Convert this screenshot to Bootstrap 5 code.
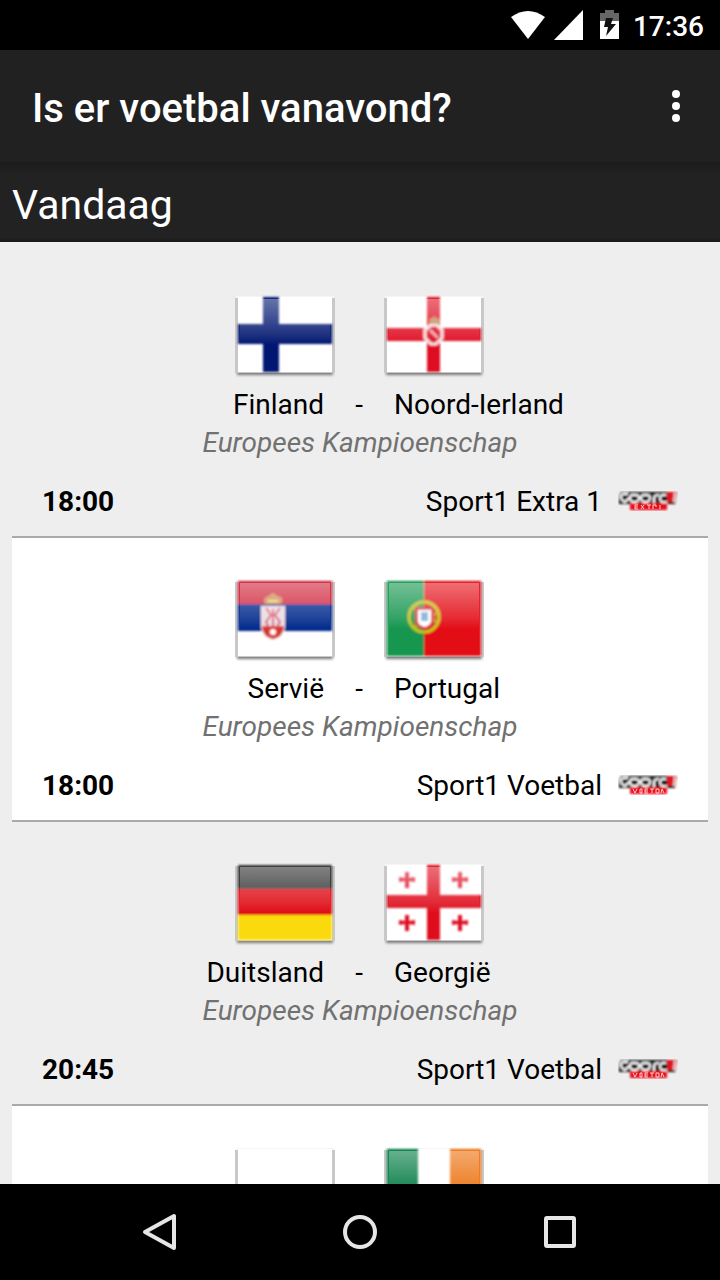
<!DOCTYPE html>
<html lang="nl">
<head>
<meta charset="utf-8">
<meta name="viewport" content="width=device-width, initial-scale=1">
<title>Is er voetbal vanavond?</title>
<link href="https://cdn.jsdelivr.net/npm/bootstrap@5.3.0/dist/css/bootstrap.min.css" rel="stylesheet">
<style>
body { font-family: Roboto, "Noto Sans", sans-serif; font-size: 28px; line-height: 38px; color: #000; background: #eee; }
svg { display: block; flex: none; }
.statusbar { height: 50px; background: #000; font-weight: 500; padding-right: 16px; }
.statusbar span { padding-top: 4px; }
.appbar { height: 112px; background: #212121; padding: 4px 24px 0 32px; }
.appbar h1 { font-size: 40px; line-height: 48px; font-weight: 500; padding-top: 2px; }
.plain-btn { border: 0; background: none; padding: 0; }
.day-head { height: 80px; padding: 6px 12px 0; font-size: 41px; line-height: 48px; font-weight: 400; background: linear-gradient(#1b1b1b, #222 12px, #222 76px, #1c1c1c 78px); }
.matches { min-height: 0; padding: 12px 12px 0; }
.match-row { padding: 41px 30px 15px; border-bottom: 2px solid #a9a9a9; }
.match-row:nth-child(even) { background: #fff; }
.flag-pair { gap: 49px; padding-right: 1px; }
.teams { display: grid; grid-template-columns: 1fr 70px 1fr; padding-right: 2px; }
.league { color: #717171; }
.meta-line { margin-top: 21px; }
.channel { gap: 16px; }
.navkeys { height: 96px; background: #000; padding: 0 60px; }
.navkeys button { width: 200px; height: 96px; }
</style>
</head>
<body>
<svg width="0" height="0" class="position-absolute" aria-hidden="true">
  <defs>
    <filter id="soft" x="-5%" y="-5%" width="110%" height="110%"><feGaussianBlur stdDeviation="0.8"/></filter>
    <filter id="shade" x="-10%" y="-10%" width="120%" height="120%"><feGaussianBlur stdDeviation="1.6"/></filter>
    <linearGradient id="shine" x1="0" y1="0" x2="0" y2="1">
      <stop offset="0" stop-color="#fff" stop-opacity=".4"/>
      <stop offset=".5" stop-color="#fff" stop-opacity=".12"/>
      <stop offset=".65" stop-color="#fff" stop-opacity="0"/>
    </linearGradient>
    <symbol id="flag-base" viewBox="0 0 100 91">
      <rect x="2" y="5" width="96" height="75" fill="#777" filter="url(#shade)"/>
      <rect x="0" y="3" width="100" height="75" fill="#c8c8c8"/>
      <rect x="1" y="1" width="98" height="2" fill="#f5f5f5"/>
      <rect x="3" y="2" width="94" height="75" fill="#fff"/>
    </symbol>
    <symbol id="flag-gloss" viewBox="0 0 100 91">
      <rect x="5" y="4" width="90" height="71" fill="url(#shine)"/>
    </symbol>
    <symbol id="georgian-cross" viewBox="0 0 16 18">
      <path d="M6 1h4v6l6-1v5l-6-1v7H6v-7l-6 1V6l6 1z" fill="#df1020"/>
    </symbol>
    <symbol id="sport-mark" viewBox="0 0 60 24">
      <g filter="url(#soft)">
        <path d="M3 2h56l-2 12H1V6z" fill="#161616"/>
        <path d="M10 4H6Q3 4 3 7t4 5l4-4M14 5h4q3 0 3 3t-3 4h-3q-3-1-3-4t2-3M26 5h3q3 0 3 3t-3 4h-3q-3-1-3-4t3-3M36 13V8q0-3 5-3M48 5h-3q-3 0-3 4t7 3" fill="none" stroke="#fff" stroke-width="2"/>
        <path d="M49 2h10l-2 10h-8z" fill="#df1824"/>
        <path d="M57 3l-1 9" stroke="#f5dada" stroke-width="2"/>
        <path d="M12 13h37v7H12z" fill="#ea101c"/>
      </g>
    </symbol>
  </defs>
</svg>

<div class="d-flex flex-column vh-100 overflow-hidden">
  <div class="statusbar d-flex align-items-center justify-content-end text-white flex-shrink-0">
    <svg width="36" height="30" viewBox="0 0 36 30" fill="#fff"><path d="M1 7Q18-5 35 7L18 29z"/></svg>
    <svg class="ms-2" width="30" height="30" viewBox="0 0 30 30" fill="#fff"><path d="M29 0v30H0z"/></svg>
    <svg class="ms-3" width="33" height="30" viewBox="0 0 33 30"><path d="M0 3h5V0h9v3h5v8H0z" fill="#666"/><path d="M0 11h19v18H0z" fill="#fff"/><path d="M6 8h7l-2 6h5L6 26l2-9H4z" fill="#111"/></svg>
    <span>17:36</span>
  </div>

  <header class="appbar d-flex align-items-center justify-content-between text-white flex-shrink-0">
    <h1 class="m-0">Is er voetbal vanavond?</h1>
    <button type="button" class="plain-btn" aria-label="Meer opties">
      <svg width="40" height="40" viewBox="0 0 40 40" fill="#fff"><circle cx="20" cy="6" r="4"/><circle cx="20" cy="18" r="4"/><circle cx="20" cy="30" r="4"/></svg>
    </button>
  </header>

  <h2 class="day-head d-flex align-items-center text-white m-0 flex-shrink-0">Vandaag</h2>

  <main class="matches flex-grow-1 overflow-hidden">
    <article class="match-row">
      <div class="flag-pair d-flex justify-content-center">
        <svg width="100" height="91" viewBox="0 0 100 91"><use href="#flag-base"/>
          <g filter="url(#soft)"><path d="M28 2h16v75H28zM3 29h94v20H3z" fill="#04146f"/></g><use href="#flag-gloss"/></svg>
        <svg width="100" height="91" viewBox="0 0 100 91"><use href="#flag-base"/>
          <g filter="url(#soft)"><path d="M43 2h13v75H43zM3 33h94v13H3z" fill="#df0a20"/><path d="M47 30h6l5 5v8l-6 6h-5l-6-6v-8z" fill="none" stroke="#fbe6ea" stroke-width="3"/><path d="M46 35l8 8" stroke="#f3bcc4" stroke-width="2"/><path d="M45 29l1-5 3-1 1-2 2 2 3 1 1 5z" fill="#c28c58"/></g><use href="#flag-gloss"/></svg>
      </div>
      <div class="teams"><span class="text-end">Finland</span><span class="text-center">-</span><span class="text-nowrap">Noord-Ierland</span></div>
      <div class="league text-center fst-italic">Europees Kampioenschap</div>
      <div class="meta-line d-flex justify-content-between">
        <time class="fw-bold">18:00</time>
        <div class="channel d-flex align-items-center"><span>Sport1 Extra 1</span>
          <svg width="60" height="24" viewBox="0 0 60 24"><use href="#sport-mark"/><path d="M17 15v4M17 15h3M17 17h3M17 19h3M23 15l3 4M26 15l-3 4M29 15h4M31 15v4M35 19v-4h3v2M42 15v4" stroke="#ffd0d0" fill="none"/></svg></div>
      </div>
    </article>

    <article class="match-row">
      <div class="flag-pair d-flex justify-content-center">
        <svg width="100" height="91" viewBox="0 0 100 91"><use href="#flag-base"/>
          <g filter="url(#soft)"><path d="M3 2h94v24H3z" fill="#cf2038"/><path d="M3 25h94v27H3z" fill="#062a8c"/><path d="M26 27h24v22q-2 10-12 12-10-2-12-12z" fill="#e8dce4"/><path d="M27 47h22q-1 11-11 13-10-2-11-13z" fill="#d9342c"/><path d="M31 29l5 7-5 7 3 6M45 29l-5 7 5 7-4 6M38 30v17" fill="none" stroke="#dc5066" stroke-width="2"/><circle cx="38" cy="53" r="3" fill="#fff"/><path d="M30 25q-3-7 4-8l4-3 4 3q8 1 4 8z" fill="#d08c50"/><path d="M33 22h10" stroke="#f4d77c" stroke-width="2"/></g><use href="#flag-gloss"/></svg>
        <svg width="100" height="91" viewBox="0 0 100 91"><use href="#flag-base"/>
          <g filter="url(#soft)"><path d="M3 2h38v75H3z" fill="#129650"/><path d="M40 2h57v75H40z" fill="#e30d18"/><circle cx="40" cy="38" r="15" fill="none" stroke="#c9c717" stroke-width="3"/><path d="M27 31q13-9 26 14M27 45q11 9 26-12" fill="none" stroke="#b5b51b" stroke-width="2"/><path d="M31 28h19v15q-1 6-9 8-9-2-10-8z" fill="#d8343c"/><path d="M34 31h13v12q-2 4-6 5-6-1-7-5z" fill="#fff"/><path d="M37 33h7v9h-7z" fill="#7fb0dc"/></g><use href="#flag-gloss"/></svg>
      </div>
      <div class="teams"><span class="text-end">Servië</span><span class="text-center">-</span><span class="text-nowrap">Portugal</span></div>
      <div class="league text-center fst-italic">Europees Kampioenschap</div>
      <div class="meta-line d-flex justify-content-between">
        <time class="fw-bold">18:00</time>
        <div class="channel d-flex align-items-center"><span>Sport1 Voetbal</span>
          <svg width="60" height="24" viewBox="0 0 60 24"><use href="#sport-mark"/><path d="M15 15l2 4 2-4M22 15h2v4h-2zM30 15h-3v4h3M27 17h3M32 15h4M34 15v4M38 15h3v4h-3zM43 19l1-4 2 4" stroke="#ffd0d0" fill="none"/></svg></div>
      </div>
    </article>

    <article class="match-row">
      <div class="flag-pair d-flex justify-content-center">
        <svg width="100" height="91" viewBox="0 0 100 91"><use href="#flag-base"/>
          <g filter="url(#soft)"><path d="M3 2h94v24H3z" fill="#2e2e2e"/><path d="M3 26h94v26H3z" fill="#df0714"/><path d="M3 52h94v25H3z" fill="#fada10"/></g><use href="#flag-gloss"/></svg>
        <svg width="100" height="91" viewBox="0 0 100 91"><use href="#flag-base"/>
          <g filter="url(#soft)"><path d="M43 2h13v75H43zM3 32h94v13H3z" fill="#df0a1c"/><use href="#georgian-cross" x="15" y="8" width="16" height="18"/><use href="#georgian-cross" x="68" y="8" width="16" height="18"/><use href="#georgian-cross" x="15" y="51" width="16" height="18"/><use href="#georgian-cross" x="68" y="51" width="16" height="18"/></g><use href="#flag-gloss"/></svg>
      </div>
      <div class="teams"><span class="text-end">Duitsland</span><span class="text-center">-</span><span class="text-nowrap">Georgië</span></div>
      <div class="league text-center fst-italic">Europees Kampioenschap</div>
      <div class="meta-line d-flex justify-content-between">
        <time class="fw-bold">20:45</time>
        <div class="channel d-flex align-items-center"><span>Sport1 Voetbal</span>
          <svg width="60" height="24" viewBox="0 0 60 24"><use href="#sport-mark"/><path d="M15 15l2 4 2-4M22 15h2v4h-2zM30 15h-3v4h3M27 17h3M32 15h4M34 15v4M38 15h3v4h-3zM43 19l1-4 2 4" stroke="#ffd0d0" fill="none"/></svg></div>
      </div>
    </article>

    <article class="match-row">
      <div class="flag-pair d-flex justify-content-center">
        <svg width="100" height="91" viewBox="0 0 100 91"><use href="#flag-base"/><path d="M3 40h94v37H3z" fill="#df0a20"/></svg>
        <svg width="100" height="91" viewBox="0 0 100 91"><use href="#flag-base"/>
          <g filter="url(#soft)"><path d="M3 2h31v75H3z" fill="#067a42"/><path d="M66 2h31v75H66z" fill="#ec7010"/></g><use href="#flag-gloss"/></svg>
      </div>
    </article>
  </main>

  <nav class="navkeys d-flex justify-content-center flex-shrink-0" aria-label="Systeemnavigatie">
    <button type="button" class="plain-btn d-flex align-items-center justify-content-center" aria-label="Terug"><svg width="40" height="40" viewBox="0 0 40 40" fill="none" stroke="#e6e6e6" stroke-width="4" stroke-linejoin="round"><path d="M34 4v32L5 20z"/></svg></button>
    <button type="button" class="plain-btn d-flex align-items-center justify-content-center" aria-label="Start"><svg width="40" height="40" viewBox="0 0 40 40" fill="none" stroke="#e6e6e6" stroke-width="4"><circle cx="20" cy="20" r="15"/></svg></button>
    <button type="button" class="plain-btn d-flex align-items-center justify-content-center" aria-label="Overzicht"><svg width="40" height="40" viewBox="0 0 40 40" fill="none" stroke="#e6e6e6" stroke-width="4"><rect x="6" y="6" width="28" height="28" rx="1"/></svg></button>
  </nav>
</div>
<script src="https://cdn.jsdelivr.net/npm/bootstrap@5.3.0/dist/js/bootstrap.bundle.min.js"></script>
</body>
</html>
